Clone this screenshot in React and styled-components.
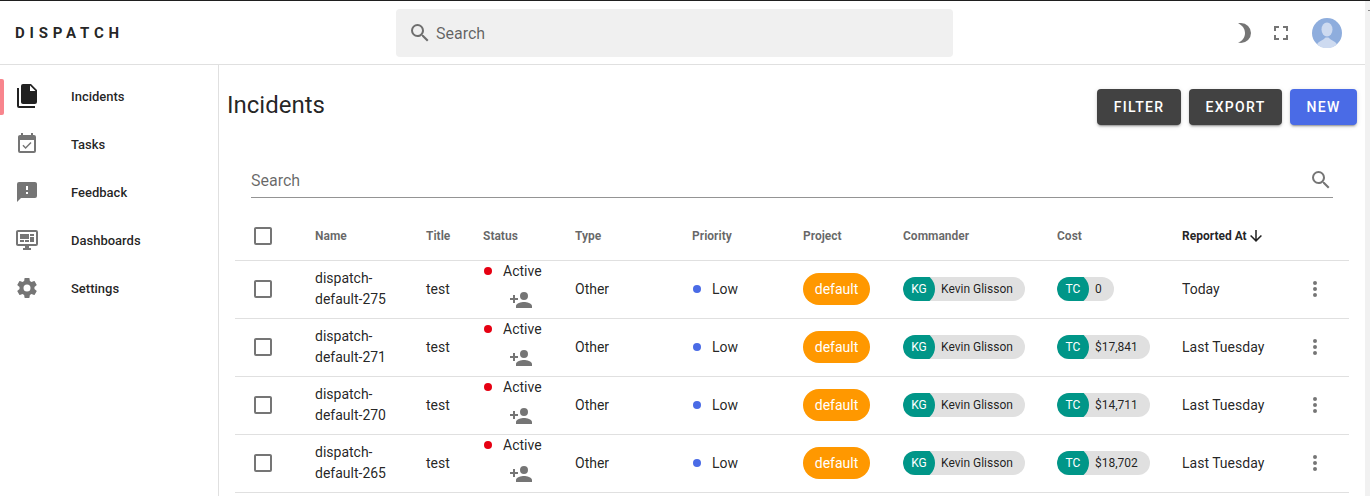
import React from "react";
import styled, { createGlobalStyle } from "styled-components";

const P = {
  files: "M15,7H20.5L15,1.5V7M8,0H16L22,6V18A2,2 0 0,1 20,20H8C6.89,20 6,19.1 6,18V2A2,2 0 0,1 8,0M4,4V22H20V24H4A2,2 0 0,1 2,22V4H4Z",
  tasks: "M19,19H5V8H19M19,3H18V1H16V3H8V1H6V3H5C3.89,3 3,3.9 3,5V19A2,2 0 0,0 5,21H19A2,2 0 0,0 21,19V5A2,2 0 0,0 19,3M16.53,11.06L15.47,10L10.59,14.88L8.47,12.76L7.41,13.82L10.59,17L16.53,11.06Z",
  feedback: "M13,10H11V6H13M13,14H11V12H13M20,2H4A2,2 0 0,0 2,4V22L6,18H20A2,2 0 0,0 22,16V4C22,2.89 21.1,2 20,2Z",
  dashboard: "M21,16V4H3V16H21M21,2A2,2 0 0,1 23,4V16A2,2 0 0,1 21,18H14V20H16V22H8V20H10V18H3C1.89,18 1,17.1 1,16V4C1,2.89 1.89,2 3,2H21M5,6H14V11H5V6M15,6H19V8H15V6M19,9V14H15V9H19M5,12H9V14H5V12M10,12H14V14H10V12Z",
  cog: "M12,15.5A3.5,3.5 0 0,1 8.5,12A3.5,3.5 0 0,1 12,8.5A3.5,3.5 0 0,1 15.5,12A3.5,3.5 0 0,1 12,15.5M19.43,12.97C19.47,12.65 19.5,12.33 19.5,12C19.5,11.67 19.47,11.34 19.43,11L21.54,9.37C21.73,9.22 21.78,8.95 21.66,8.73L19.66,5.27C19.54,5.05 19.27,4.96 19.05,5.05L16.56,6.05C16.04,5.66 15.5,5.32 14.87,5.07L14.5,2.42C14.46,2.18 14.25,2 14,2H10C9.75,2 9.54,2.18 9.5,2.42L9.13,5.07C8.5,5.32 7.96,5.66 7.44,6.05L4.95,5.05C4.73,4.96 4.46,5.05 4.34,5.27L2.34,8.73C2.21,8.95 2.27,9.22 2.46,9.37L4.57,11C4.53,11.34 4.5,11.67 4.5,12C4.5,12.33 4.53,12.65 4.57,12.97L2.46,14.63C2.27,14.78 2.21,15.05 2.34,15.27L4.34,18.73C4.46,18.95 4.73,19.03 4.95,18.95L7.44,17.94C7.96,18.34 8.5,18.68 9.13,18.93L9.5,21.58C9.54,21.82 9.75,22 10,22H14C14.25,22 14.46,21.82 14.5,21.58L14.87,18.93C15.5,18.67 16.04,18.34 16.56,17.94L19.05,18.95C19.27,19.03 19.54,18.95 19.66,18.73L21.66,15.27C21.78,15.05 21.73,14.78 21.54,14.63L19.43,12.97Z",
  magnify: "M9.5,3A6.5,6.5 0 0,1 16,9.5C16,11.11 15.41,12.59 14.44,13.73L14.71,14H15.5L20.5,19L19,20.5L14,15.5V14.71L13.73,14.44C12.59,15.41 11.11,16 9.5,16A6.5,6.5 0 0,1 3,9.5A6.5,6.5 0 0,1 9.5,3M9.5,5C7,5 5,7 5,9.5C5,12 7,14 9.5,14C12,14 14,12 14,9.5C14,7 12,5 9.5,5Z",
  accountPlus: "M15,14C12.33,14 7,15.33 7,18V20H23V18C23,15.33 17.67,14 15,14M6,10V7H4V10H1V12H4V15H6V12H9V10M15,12A4,4 0 0,0 19,8A4,4 0 0,0 15,4A4,4 0 0,0 11,8A4,4 0 0,0 15,12Z",
  checkbox: "M19,3H5C3.89,3 3,3.89 3,5V19A2,2 0 0,0 5,21H19A2,2 0 0,0 21,19V5C21,3.89 20.1,3 19,3M19,5V19H5V5H19Z",
  dots: "M12,16A2,2 0 0,1 14,18A2,2 0 0,1 12,20A2,2 0 0,1 10,18A2,2 0 0,1 12,16M12,10A2,2 0 0,1 14,12A2,2 0 0,1 12,14A2,2 0 0,1 10,12A2,2 0 0,1 12,10M12,4A2,2 0 0,1 14,6A2,2 0 0,1 12,8A2,2 0 0,1 10,6A2,2 0 0,1 12,4Z",
  arrowDown: "M11,4H13V16L18.5,10.5L19.92,11.92L12,19.84L4.08,11.92L5.5,10.5L11,16V4Z",
  fullscreen: "M5,5H10V7H7V10H5V5M14,5H19V10H17V7H14V5M17,14H19V19H14V17H17V14M10,17V19H5V14H7V17H10Z",
  moon: "M9,2C7.95,2 6.95,2.16 6,2.46C10.06,3.73 13,7.5 13,12C13,16.5 10.06,20.27 6,21.54C6.95,21.84 7.95,22 9,22A10,10 0 0,0 19,12A10,10 0 0,0 9,2Z",
};

const Global = createGlobalStyle`
  html, body { margin: 0; padding: 0; height: 496px; overflow: hidden; background: #fff; }
  body { font-family: Roboto, "Liberation Sans", sans-serif; color: rgba(0,0,0,.87); }
  * { box-sizing: border-box; }
`;

const Svg = styled.svg`
  display: block;
  flex: none;
  width: ${(p) => p.$size || 24}px;
  height: ${(p) => p.$size || 24}px;
  fill: ${(p) => p.$color || "rgba(0,0,0,.54)"};
`;
const Icon = ({ d, size, color }) => (
  <Svg viewBox="0 0 24 24" $size={size} $color={color}><path d={d} /></Svg>
);

const Page = styled.div`
  display: flex;
  width: 1370px;
  height: 496px;
  overflow: hidden;
`;
const Viewport = styled.div`
  flex: 1;
  min-width: 0;
  display: flex;
  flex-direction: column;
  border-top: 1px solid #1f1f1f;
`;
const ScrollTrack = styled.div`
  width: 5px;
  flex: none;
  background: #f1f1f1;
  border-top: 1px solid #1f1f1f;
  padding: 9px 0 0 3px;
`;
const ScrollTick = styled.div`
  width: 2px;
  height: 1px;
  background: #8a8a8a;
`;
const AppBar = styled.header`
  height: 64px;
  flex: none;
  display: flex;
  align-items: center;
  border-bottom: 1px solid #e0e0e0;
`;
const Logo = styled.div`
  width: 396px;
  flex: none;
  padding-left: 15px;
  font-size: 15px;
  font-weight: 700;
  letter-spacing: 4.8px;
  color: rgba(0,0,0,.87);
`;
const TopSearch = styled.div`
  width: 557px;
  height: 48px;
  border-radius: 4px;
  background: #f0f0f0;
  display: flex;
  align-items: center;
  gap: 4px;
  padding-left: 12px;
  font-size: 16px;
  color: rgba(0,0,0,.6);
`;
const SearchText = styled.span`
  padding-top: 2px;
`;
const BarActions = styled.div`
  margin-left: auto;
  display: flex;
  align-items: center;
  padding-right: 23px;
`;
const BarIcon = styled.div`
  width: 24px;
  height: 24px;
  margin-right: ${(p) => p.$gap}px;
`;
const Avatar = styled.div`
  width: 30px;
  height: 30px;
  border-radius: 50%;
`;
const Body = styled.div`
  flex: 1;
  min-height: 0;
  display: flex;
`;
const Side = styled.nav`
  width: 219px;
  flex: none;
  border-right: 1px solid #e0e0e0;
  padding-top: 7px;
`;
const NavItem = styled.div`
  position: relative;
  height: 48px;
  display: flex;
  align-items: center;
  padding-left: 15px;
  font-size: 13px;
  font-weight: 500;
  color: rgba(0,0,0,.87);
  &::before {
    content: "";
    display: ${(p) => (p.$active ? "block" : "none")};
    position: absolute;
    left: 0;
    top: 7px;
    width: 4px;
    height: 36px;
    background: #f8858d;
    border-radius: 0 2px 2px 0;
  }
`;
const NavLabel = styled.span`
  margin-left: 32px;
`;
const Main = styled.main`
  flex: 1;
  min-width: 0;
  padding: 24px 8px 0;
`;
const TitleRow = styled.div`
  display: flex;
  align-items: center;
  height: 36px;
  gap: 8px;
`;
const Title = styled.h1`
  margin: -4px auto 0 0;
  font-size: 24px;
  font-weight: 400;
  line-height: 32px;
`;
const Btn = styled.button`
  height: 36px;
  width: ${(p) => p.$w}px;
  border: 0;
  border-radius: 4px;
  padding: 0;
  background: ${(p) => (p.$primary ? "#4a6be6" : "#424242")};
  color: #fff;
  font-family: inherit;
  font-size: 14px;
  font-weight: 500;
  letter-spacing: 1.3px;
  box-shadow: 0 3px 1px -2px rgba(0,0,0,.2), 0 2px 2px 0 rgba(0,0,0,.14), 0 1px 5px 0 rgba(0,0,0,.12);
`;
const TableWrap = styled.div`
  padding: 0 8px;
`;
const TableSearch = styled.div`
  margin: 40px 16px 0;
  height: 33px;
  border-bottom: 1px solid #949494;
  display: flex;
  align-items: center;
  justify-content: space-between;
  font-size: 16px;
  color: rgba(0,0,0,.6);
  padding-bottom: 2px;
`;
const Row = styled.div`
  display: grid;
  grid-template-columns: 64px 111px 57px 92px 117px 111px 100px 154px 125px 132px 51px;
  align-items: center;
  height: ${(p) => (p.$head ? 63 : 58)}px;
  padding-top: ${(p) => (p.$head ? 14 : 0)}px;
  padding-bottom: ${(p) => (p.$head ? 0 : 1)}px;
  border-bottom: 1px solid #e0e0e0;
  font-size: 14px;
`;
const Cell = styled.div`
  padding-left: 16px;
  line-height: 21px;
`;
const ActionCell = styled.div`
  padding-left: 5px;
`;
const HeadCell = styled(Cell)`
  display: flex;
  align-items: center;
  font-size: 12px;
  font-weight: 700;
  color: ${(p) => (p.$on ? "rgba(0,0,0,.87)" : "rgba(0,0,0,.6)")};
`;
const Dot = styled.span`
  display: block;
  width: 8px;
  height: 8px;
  border-radius: 50%;
  flex: none;
  background: ${(p) => p.$color};
`;
const DotLine = styled.div`
  display: flex;
  align-items: center;
  gap: 11px;
  padding-left: 1px;
`;
const AddPerson = styled.div`
  padding-left: 26px;
  margin-top: 6px;
`;
const StatusBox = styled.div`
  margin: -3px 0 3px;
`;
const Pill = styled.span`
  display: inline-flex;
  align-items: center;
  width: 67px;
  justify-content: center;
  height: 32px;
  border-radius: 16px;
  background: #ff9800;
  color: #fff;
  font-size: 14px;
`;
const Chip = styled.span`
  display: inline-flex;
  align-items: center;
  height: 24px;
  border-radius: 12px;
  overflow: hidden;
  background: #e0e0e0;
  font-size: 12px;
  padding-right: 12px;
  color: rgba(0,0,0,.87);
`;
const ChipAvatar = styled.span`
  width: 32px;
  height: 32px;
  flex: none;
  margin-right: 6px;
  border-radius: 50%;
  background: #009688;
  color: #fff;
  display: flex;
  align-items: center;
  justify-content: center;
`;

const rows = [
  { id: 275, cost: "0", at: "Today" },
  { id: 271, cost: "$17,841", at: "Last Tuesday" },
  { id: 270, cost: "$14,711", at: "Last Tuesday" },
  { id: 265, cost: "$18,702", at: "Last Tuesday" },
];
const nav = [
  ["Incidents", P.files],
  ["Tasks", P.tasks],
  ["Feedback", P.feedback],
  ["Dashboards", P.dashboard],
  ["Settings", P.cog],
];
const heads = ["Name", "Title", "Status", "Type", "Priority", "Project", "Commander", "Cost"];

export default function App() {
  return (
    <Page>
      <Global />
      <Viewport>
        <AppBar>
          <Logo>DISPATCH</Logo>
          <TopSearch>
            <Icon d={P.magnify} />
            <SearchText>Search</SearchText>
          </TopSearch>
          <BarActions>
            <BarIcon $gap={13}><Icon d={P.moon} /></BarIcon>
            <BarIcon $gap={19}><Icon d={P.fullscreen} /></BarIcon>
            <Avatar>
              <svg viewBox="0 0 30 30" width="30" height="30">
                <circle cx="15" cy="15" r="15" fill="#8eaddd" />
                <ellipse cx="15" cy="11.500" rx="5.500" ry="7" fill="#cddaf0" />
                <path d="M5 26.500c1-3 6-4 8.500-7h3c2.500 3 7.500 4 8.500 7a15 15 0 0 1-20 0z" fill="#cddaf0" />
              </svg>
            </Avatar>
          </BarActions>
        </AppBar>
        <Body>
          <Side>
            {nav.map(([label, d], i) => (
              <NavItem key={label} $active={i === 0}>
                <Icon d={d} color={i === 0 ? "rgba(0,0,0,.87)" : undefined} />
                <NavLabel>{label}</NavLabel>
              </NavItem>
            ))}
          </Side>
          <Main>
            <TitleRow>
              <Title>Incidents</Title>
              <Btn $w={84}>FILTER</Btn>
              <Btn $w={93}>EXPORT</Btn>
              <Btn $w={67} $primary>NEW</Btn>
            </TitleRow>
            <TableWrap>
              <TableSearch>
                Search
                <Icon d={P.magnify} />
              </TableSearch>
              <Row $head>
                <Cell><Icon d={P.checkbox} /></Cell>
                {heads.map((h) => <HeadCell key={h}>{h}</HeadCell>)}
                <HeadCell $on>
                  Reported At
                  <Icon d={P.arrowDown} size={18} color="rgba(0,0,0,.87)" />
                </HeadCell>
                <Cell />
              </Row>
              {rows.map((r) => (
                <Row key={r.id}>
                  <Cell><Icon d={P.checkbox} /></Cell>
                  <Cell>dispatch-<br />default-{r.id}</Cell>
                  <Cell>test</Cell>
                  <Cell>
                    <StatusBox>
                      <DotLine><Dot $color="#e60012" />Active</DotLine>
                      <AddPerson><Icon d={P.accountPlus} /></AddPerson>
                    </StatusBox>
                  </Cell>
                  <Cell>Other</Cell>
                  <Cell><DotLine><Dot $color="#4a6be6" />Low</DotLine></Cell>
                  <Cell><Pill>default</Pill></Cell>
                  <Cell><Chip><ChipAvatar>KG</ChipAvatar>Kevin Glisson</Chip></Cell>
                  <Cell><Chip><ChipAvatar>TC</ChipAvatar>{r.cost}</Chip></Cell>
                  <Cell>{r.at}</Cell>
                  <ActionCell><Icon d={P.dots} /></ActionCell>
                </Row>
              ))}
            </TableWrap>
          </Main>
        </Body>
      </Viewport>
      <ScrollTrack><ScrollTick /></ScrollTrack>
    </Page>
  );
}
